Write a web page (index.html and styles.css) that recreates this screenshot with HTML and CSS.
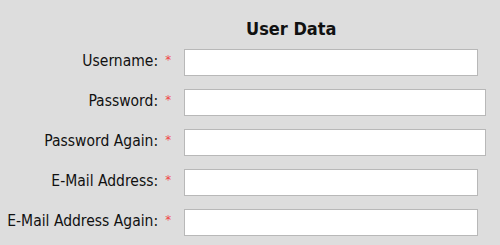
FILE: index.html
```html
<!DOCTYPE html>
<html lang="en">
<head>
  <meta charset="UTF-8">
  <title>User Data</title>
  <link rel="stylesheet" href="styles.css">
</head>
<body>

  <h2 class="title">User Data</h2>

  <form class="user-form">
    <label class="field-label" for="username">Username:<span class="req">*</span></label>
    <input class="field" type="text" id="username">

    <label class="field-label" for="password">Password:<span class="req">*</span></label>
    <input class="field wide" type="password" id="password">

    <label class="field-label" for="password2">Password Again:<span class="req">*</span></label>
    <input class="field wide" type="password" id="password2">

    <label class="field-label" for="email">E-Mail Address:<span class="req">*</span></label>
    <input class="field" type="text" id="email">

    <label class="field-label" for="email2">E-Mail Address Again:<span class="req">*</span></label>
    <input class="field" type="text" id="email2">
  </form>

</body>
</html>
```

FILE: styles.css
```css
body {
  margin: 0;
  background-color: #dddddd;
  font-family: "DejaVu Sans Condensed", "DejaVu Sans", sans-serif;
  font-stretch: condensed;
  color: #111;
}
.title {
  margin: 0;
  padding: 18px 0 0 246px;
  height: 49px;
  box-sizing: border-box;
  font-size: 18px;
  line-height: 21px;
  font-weight: bold;
}
.user-form {
  display: grid;
  grid-template-columns: 171px auto;
  column-gap: 13px;
  row-gap: 13px;
  align-items: center;
  justify-items: start;
}
.field-label {
  justify-self: end;
  font-size: 15.5px;
  padding-bottom: 4px;
}
.req {
  color: #f04545;
  margin-left: 7px;
  font-size: 13px;
  vertical-align: 2px;
}
.field {
  box-sizing: border-box;
  width: 294px;
  height: 27px;
  margin: 0;
  border: 1px solid #b8b8b8;
  background: #fff;
}
.wide {
  width: 302px;
}
```
